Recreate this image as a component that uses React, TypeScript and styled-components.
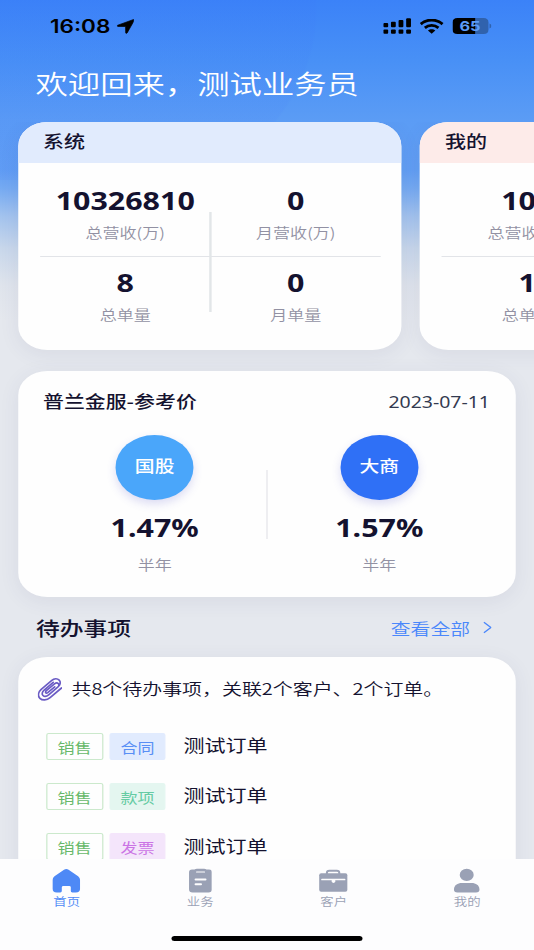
import React from 'react';
import styled, { createGlobalStyle } from 'styled-components';

const RATIO = 1.2164;
const lx = (n: number) => `${(n / RATIO).toFixed(2)}px`;

const GlobalStyle = createGlobalStyle`
  * { box-sizing: border-box; }
  html, body { margin: 0; padding: 0; overflow: hidden; }
  body { width: 534px; height: 950px; background: #e5e8ee; }
`;

const cjk = `'Noto Sans CJK SC', sans-serif`;
const numeric = `'Noto Sans', 'Noto Sans CJK SC', sans-serif`;

/* The layout is 439px wide and widened to fill the window. */
const Screen = styled.div`
  display: flex;
  flex-direction: column;
  width: 439px;
  height: 950px;
  overflow: hidden;
  transform: scaleX(${RATIO});
  transform-origin: 0 0;
  font-family: ${cjk};
  color: #14122f;
  white-space: nowrap;
  background:
    radial-gradient(circle at 60px 10px, rgba(60, 110, 250, 0.07) 199px, transparent 201px) no-repeat 0 0 / 100% 180px,
    linear-gradient(180deg, #3b82f8 0, #4890f6 60px, #5b9cf5 120px, #629ff4 170px, #75aaf2 188px,
      #a3c3ee 216px, #c8d7eb 248px, #dfe4ec 285px, #e5e8ee 320px);
`;

const StatusBar = styled.header`
  display: flex;
  align-items: center;
  flex: none;
  height: 52px;
  padding: 0 ${lx(42)} 0 ${lx(50)};
  color: #000;
`;

const Clock = styled.span`
  font: 600 18.5px/20px Inter, sans-serif;
  margin-right: ${lx(6)};
`;

const StatusIcons = styled.div`
  display: flex;
  align-items: center;
  gap: ${lx(8.9)};
  margin-left: auto;
`;

const Welcome = styled.h1`
  flex: none;
  margin: 0;
  height: 70px;
  padding: 11px 0 0 ${lx(35.5)};
  font-size: 26.6px;
  font-weight: 350;
  line-height: 40px;
  color: #fff;
`;

const Main = styled.main`
  flex: 1;
  min-height: 0;
  overflow: hidden;
`;

const Carousel = styled.div`
  display: flex;
  gap: ${lx(18)};
  padding: 0 0 21px ${lx(18)};
`;

const Card = styled.section`
  border-radius: 24px;
  background: #fefefe;
  box-shadow: 0 4px 18px rgba(60, 70, 110, 0.08);
`;

const StatCard = styled(Card)`
  flex: none;
  width: ${lx(384)};
  height: 228px;
  overflow: hidden;
`;

const StatHead = styled.div<{ $tint: string }>`
  height: 41px;
  padding-left: ${lx(25)};
  background: ${(p) => p.$tint};
  font-size: 17.3px;
  font-weight: 500;
  line-height: 37px;
`;

const StatGrid = styled.div`
  position: relative;
  display: grid;
  grid-template-columns: 1fr 1fr;
  grid-template-rows: 82px 82px;
  margin: 12px ${lx(21)} 0 ${lx(22)};
  &::before {
    content: '';
    position: absolute;
    left: 0;
    right: 0;
    top: 81px;
    height: 1px;
    background: #e2e4e8;
  }
  &::after {
    content: '';
    position: absolute;
    left: 50%;
    top: 37px;
    height: 100px;
    width: 1.4px;
    margin-left: -0.7px;
    background: #e2e6e8;
  }
`;

const Stat = styled.div`
  text-align: center;
  padding-top: 10px;
`;

const Figure = styled.div`
  font: 700 25px/30px ${numeric};
`;

const Caption = styled.div<{ $gap?: number }>`
  margin-top: ${(p) => p.$gap ?? 7}px;
  font-size: 14px;
  font-weight: 350;
  line-height: 20px;
  color: #9291a3;
`;

const RateCard = styled(Card)`
  height: 226px;
  margin: 0 ${lx(18)};
`;

const RateHead = styled.div`
  display: flex;
  justify-content: space-between;
  align-items: center;
  height: 58px;
  padding: 0 ${lx(26)} 0 ${lx(25)};
  font-size: 17.2px;
  font-weight: 500;
`;

const DateText = styled.time`
  font: 400 16px/20px ${numeric};
  color: #333a50;
  margin-top: 4px;
`;

const RateRow = styled.div`
  display: flex;
  align-items: flex-start;
  padding: 6px ${lx(25)} 0;
`;

const Rate = styled.div`
  flex: 1;
  display: flex;
  flex-direction: column;
  align-items: center;
`;

const RateDivider = styled.i`
  width: 1px;
  height: 69px;
  margin-top: 35px;
  background: #e3e4e8;
`;

const Badge = styled.div<{ $color: string }>`
  width: 64.5px;
  height: 64.5px;
  margin-bottom: 12px;
  border-radius: 50%;
  background: ${(p) => p.$color};
  box-shadow: 0 4px 9px rgba(80, 80, 200, 0.2);
  color: #fff;
  font-size: 16.3px;
  font-weight: 500;
  line-height: 60px;
  text-align: center;
`;

const SectionHead = styled.div`
  display: flex;
  justify-content: space-between;
  align-items: center;
  height: 60px;
  padding: 1px ${lx(42)} 0 ${lx(36)};
`;

const SectionTitle = styled.h2`
  margin: 0;
  font-size: 19.5px;
  font-weight: 500;
  line-height: 30px;
`;

const MoreLink = styled.a`
  display: flex;
  align-items: center;
  gap: ${lx(13)};
  font-size: 16.3px;
  font-weight: 350;
  color: #4a87fb;
`;

const TodoCard = styled(Card)`
  height: 240px;
  margin: 0 ${lx(18)};
`;

const Summary = styled.div`
  display: flex;
  align-items: center;
  gap: ${lx(9)};
  height: 64px;
  padding-left: ${lx(19.5)};
  font-size: 16.4px;
  line-height: 24px;
  font-weight: 350;

  span { margin-top: -2px; }
`;

const TodoRow = styled.div`
  display: flex;
  align-items: center;
  height: 50.3px;
  padding-left: ${lx(28)};
`;

const Tag = styled.span<{ $fg: string; $bg: string; $line?: string }>`
  width: ${lx(57)};
  height: 27px;
  margin-right: ${lx(6)};
  border: 1.4px solid ${(p) => p.$line ?? p.$bg};
  border-radius: 2px;
  background: ${(p) => p.$bg};
  color: ${(p) => p.$fg};
  font-size: 14px;
  line-height: 26px;
  text-align: center;
`;

const TodoName = styled.span`
  margin: -2px 0 0 ${lx(11.5)};
  font-size: 17.3px;
  line-height: 24px;
`;

const TabBar = styled.nav`
  flex: none;
  display: flex;
  flex-wrap: wrap;
  align-content: flex-start;
  height: 91px;
  background: #fdfdfe;
`;

const Tab = styled.div<{ $active?: boolean }>`
  width: 25%;
  height: 60px;
  display: flex;
  flex-direction: column;
  align-items: center;
  padding-top: 9px;
  font-size: 11px;
  line-height: 16px;
  font-weight: 350;
  color: ${(p) => (p.$active ? '#4e89f6' : '#9aa1b5')};
`;

const HomeIndicator = styled.div`
  width: ${lx(190)};
  height: 5px;
  margin: 17px auto 0;
  border-radius: 3px;
  background: #000;
`;

/* Drawn in window pixels; the width is reduced by the screen's ratio. */
const Glyph = ({ w, h, children }: { w: number; h: number; children: React.ReactNode }) => (
  <svg width={w / RATIO} height={h} viewBox={`0 0 ${w} ${h}`} preserveAspectRatio="none" fill="currentColor">
    {children}
  </svg>
);

const LocationIcon = () => (
  <Glyph w={18} h={15}>
    <path d="M16.8.5 1 6.2c-.8.3-.6 1.2.2 1.2l7.600.1.1 6.200c0 .8 1.100.9 1.500.2L17.600 1.200c.2-.5-.2-.9-.8-.7Z" stroke="currentColor" strokeWidth=".7" />
  </Glyph>
);

const SignalIcon = () => (
  <Glyph w={28} h={16}>
    {[4.9, 3.7, 1.9, 0.2].map((top, i) => (
      <React.Fragment key={top}>
        <rect x={i * 7.6 + 0.2} y={top} width="4.8" height={9.3 - top} rx="1" />
        <rect x={i * 7.6 + 0.2} y="11.6" width="4.8" height="4.2" rx="1" />
      </React.Fragment>
    ))}
  </Glyph>
);

const WifiIcon = () => (
  <Glyph w={24} h={15}>
    <g fill="none" stroke="currentColor" strokeWidth="2.8">
      <path d="M1.1 5.1C7-.3 17-.3 22.9 5.1" />
      <path d="M5.2 8.900C9 5.500 15 5.500 18.800 8.900" />
    </g>
    <path d="M8.300 11.500c2-1.800 5.400-1.800 7.400 0L12 14.800Z" />
  </Glyph>
);

const BatteryIcon = () => (
  <Glyph w={39} h={16}>
    <path d="M5 0h18v16H5Q0 16 0 11.500V4.500Q0 0 5 0Z" />
    <path fill="#3062ad" d="M23 0h8q5 0 5 4.500v7Q36 16 31 16h-8Z" />
    <path fill="#3062ad" d="M37 5.500q2 .8 2 2.500t-2 2.500Z" />
    <text x="17.500" y="12.900" fontFamily="Inter, sans-serif" fontWeight="700" fontSize="13.500" textLength="21" lengthAdjust="spacingAndGlyphs" textAnchor="middle" fill="#5b9bf8">65</text>
  </Glyph>
);

const ChevronIcon = () => (
  <Glyph w={9} h={13}>
    <path d="m1 1.200 7 5.300-7 5.300" fill="none" stroke="currentColor" strokeWidth="1.400" />
  </Glyph>
);

const ClipIcon = () => (
  <Glyph w={25} h={23}>
    <path
      d="M17 8.800 10 14.600c-1.300 1-2.600.5-2-1.100.2-.5.600-.9 1-1.200L16.800 5.800c1.500-1.200 3.100-1 3.900-.1s.7 2.300-.7 3.500L11.300 16.600c-2.400 2-4.800 2.100-6 .9-1.300-1.300-1.100-3.500 1.100-5.400L15.500 4.300M23.800 10 12.400 19.700c-3.300 2.800-7.800 3-10.200.6s-2-6.100 1.300-8.900L13.800 2.600c2.700-2.200 6-2.100 7.700-.4 1.600 1.600 1.400 4.100-.8 6.200"
      fill="none"
      stroke="#6a5bc4"
      strokeWidth="1.700"
      strokeLinecap="round"
    />
  </Glyph>
);

const HomeIcon = () => (
  <Glyph w={28} h={25}>
    <path d="M11.700 1.700q2.300-1.400 4.600 0l9.500 6.500Q27.800 9.600 27.800 12v8.500Q27.800 24.500 23.500 24.500H20q-1.500 0-1.500-1.400V19.200q0-1.300-1.600-1.300h-5.800q-1.600 0-1.600 1.300v3.900q0 1.400-1.500 1.400H4.500Q.2 24.500.2 20.500V12Q.2 9.600 2.200 8.200Z" />
  </Glyph>
);

const ClipboardIcon = () => (
  <Glyph w={24} h={25}>
    <path d="M3.500 1.600H6Q7 .8 8.400.8h7.200q1.400 0 2.400.8h2.500q3 0 3 2.600v17q0 3.300-3.600 3.300H4.100Q.5 24.500.5 21.200v-17q0-2.600 3-2.600Z" />
    <g stroke="#fdfdfe" strokeWidth="1.900" strokeLinecap="round">
      <path d="M8 4h8" strokeWidth="1.100" />
      <path d="M7 11.500h10" />
      <path d="M7 16.300h5.500" />
    </g>
  </Glyph>
);

const BriefcaseIcon = () => (
  <Glyph w={29} h={25}>
    <path d="M8.200 6V4.800Q8.200 2.800 10.600 2.800h7.600q2.400 0 2.400 2V6" fill="none" stroke="currentColor" strokeWidth="2" />
    <rect x=".5" y="5.300" width="28.200" height="18.400" rx="2" />
    <path d="M3.300 11.500h22.600" stroke="#fdfdfe" strokeWidth="1.700" strokeLinecap="round" />
    <path d="M13 12h3.600v1.200q-.3 1.500-1.800 1.700-1.500-.2-1.800-1.700Z" fill="#fdfdfe" />
  </Glyph>
);

const PersonIcon = () => (
  <Glyph w={26} h={25}>
    <ellipse cx="13" cy="6.900" rx="7" ry="6.100" />
    <path d="M6.500 15h13q6.300 1.300 6.300 6.500 0 3-3.500 3H3.700q-3.500 0-3.500-3Q.2 16.300 6.500 15Z" />
  </Glyph>
);

interface StatSet {
  title: string;
  tint: string;
  items: [string, string][];
}

const statSets: StatSet[] = [
  { title: '系统', tint: '#e1ebfd', items: [['10326810', '总营收(万)'], ['0', '月营收(万)'], ['8', '总单量'], ['0', '月单量']] },
  { title: '我的', tint: '#fdebe9', items: [['100', '总营收(万)'], ['0', '月营收(万)'], ['1', '总单量'], ['0', '月单量']] },
];

const rates = [
  { name: '国股', value: '1.47%', color: '#4aa6fa' },
  { name: '大商', value: '1.57%', color: '#2f70f6' },
];

const todos = [
  { kind: '合同', fg: '#598ff5', bg: '#e1ebfe' },
  { kind: '款项', fg: '#65cba3', bg: '#e4f6f0' },
  { kind: '发票', fg: '#cb74e5', bg: '#f4e5fb' },
];

const tabs = [
  { label: '首页', Icon: HomeIcon },
  { label: '业务', Icon: ClipboardIcon },
  { label: '客户', Icon: BriefcaseIcon },
  { label: '我的', Icon: PersonIcon },
];

export default function App() {
  return (
    <>
      <GlobalStyle />
      <Screen>
        <StatusBar>
          <Clock>16:08</Clock>
          <LocationIcon />
          <StatusIcons>
            <SignalIcon />
            <WifiIcon />
            <BatteryIcon />
          </StatusIcons>
        </StatusBar>
        <Welcome>欢迎回来，测试业务员</Welcome>
        <Main>
          <Carousel>
            {statSets.map((set) => (
              <StatCard key={set.title}>
                <StatHead $tint={set.tint}>{set.title}</StatHead>
                <StatGrid>
                  {set.items.map(([value, label]) => (
                    <Stat key={label}>
                      <Figure>{value}</Figure>
                      <Caption>{label}</Caption>
                    </Stat>
                  ))}
                </StatGrid>
              </StatCard>
            ))}
          </Carousel>
          <RateCard>
            <RateHead>
              <span>普兰金服-参考价</span>
              <DateText>2023-07-11</DateText>
            </RateHead>
            <RateRow>
              {rates.map((rate, i) => (
                <React.Fragment key={rate.name}>
                  {i > 0 && <RateDivider />}
                  <Rate>
                    <Badge $color={rate.color}>{rate.name}</Badge>
                    <Figure>{rate.value}</Figure>
                    <Caption $gap={12}>半年</Caption>
                  </Rate>
                </React.Fragment>
              ))}
            </RateRow>
          </RateCard>
          <SectionHead>
            <SectionTitle>待办事项</SectionTitle>
            <MoreLink>
              查看全部
              <ChevronIcon />
            </MoreLink>
          </SectionHead>
          <TodoCard>
            <Summary>
              <ClipIcon />
              <span>共8个待办事项，关联2个客户、2个订单。</span>
            </Summary>
            {todos.map((todo) => (
              <TodoRow key={todo.kind}>
                <Tag $fg="#68b96a" $bg="#fefefe" $line="#cbe9cc">销售</Tag>
                <Tag $fg={todo.fg} $bg={todo.bg}>{todo.kind}</Tag>
                <TodoName>测试订单</TodoName>
              </TodoRow>
            ))}
          </TodoCard>
        </Main>
        <TabBar>
          {tabs.map(({ label, Icon }, i) => (
            <Tab key={label} $active={i === 0}>
              <Icon />
              {label}
            </Tab>
          ))}
          <HomeIndicator />
        </TabBar>
      </Screen>
    </>
  );
}
